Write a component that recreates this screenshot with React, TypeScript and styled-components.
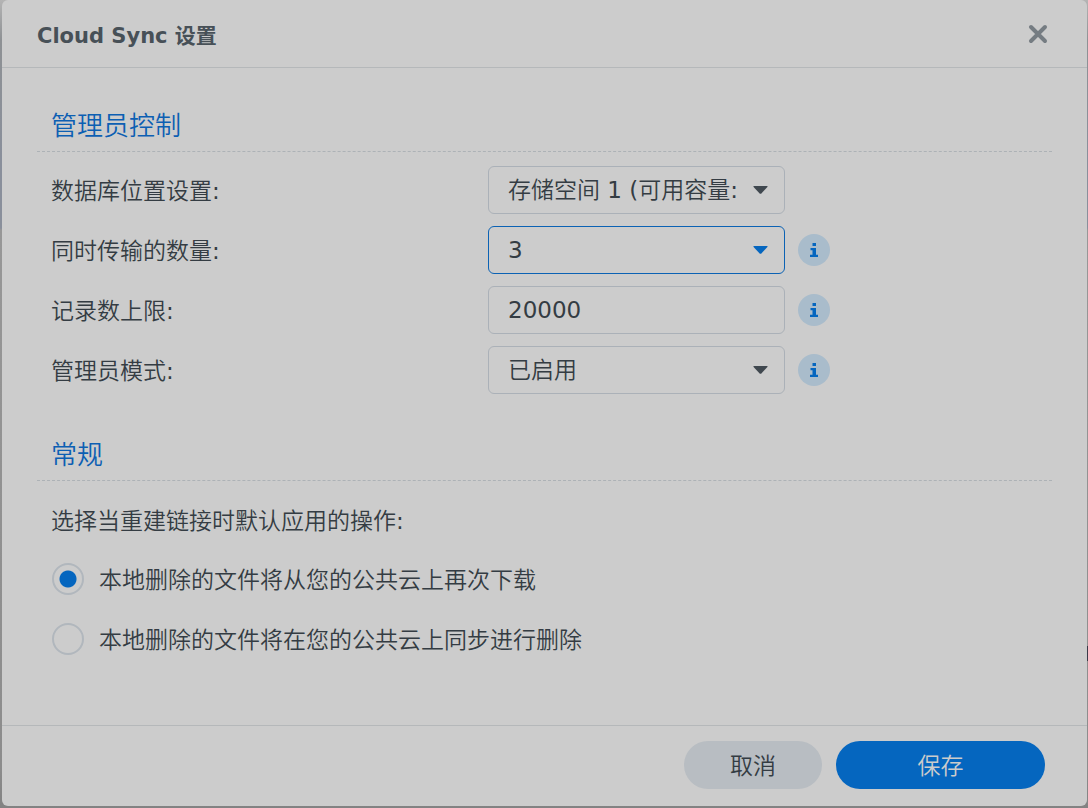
import React, { useState } from "react";
import styled, { createGlobalStyle } from "styled-components";

const GlobalStyle = createGlobalStyle`
  *, *::before, *::after { box-sizing: border-box; }
  body {
    margin: 0;
    font-family: "DejaVu Sans", "Noto Sans CJK SC DemiLight", "Noto Sans CJK SC", sans-serif;
    font-size: 23px;
    color: #343c43;
  }
  button, input, select { font: inherit; color: inherit; }
`;

const Backdrop = styled.div`
  display: flex;
  min-height: 100vh;
  padding: 0 1px 2px 2px;
  background:
    linear-gradient(#3a3a48, #3a3a48) right 80vh / 1px 15px no-repeat,
    linear-gradient(#b4b4b4 0, #8e9194 40px, #898f9b 160px, #898f9b 228px, #979797 230px, #8c8c8c 95%, #828282);
`;

const Dialog = styled.section`
  display: flex;
  flex: 1;
  flex-direction: column;
  min-width: 0;
  border-radius: 6px;
  background: #cccccc;
`;

const Header = styled.header`
  display: flex;
  align-items: center;
  justify-content: space-between;
  height: 68px;
  padding: 0 37px 0 35px;
  border-bottom: 1px solid #b5b8ba;
`;

const Title = styled.h1`
  margin: 0;
  padding-top: 4px;
  font-family: "DejaVu Sans", "Noto Sans CJK SC", sans-serif;
  font-size: 21px;
  line-height: 32px;
  font-weight: 700;
  color: #475057;
`;

const CloseButton = styled.button`
  display: flex;
  padding: 0;
  border: 0;
  background: none;
  color: #757c82;
  cursor: pointer;
`;

const Body = styled.form`
  display: flex;
  flex: 1;
  flex-direction: column;
  gap: 43px;
  padding: 40px 35px;
`;

const Group = styled.section`
  display: flex;
  flex-direction: column;
  gap: 14px;
`;

const GroupTitle = styled.h2`
  margin: 0;
  padding: 1px 14px 8px;
  border-bottom: 1px dashed #adb2b6;
  font-size: 26px;
  line-height: 34px;
  font-weight: 350;
  color: #0c5fb3;
`;

const Rows = styled.div`
  display: flex;
  flex-direction: column;
  gap: 12px;
  padding: 0 14px;
`;

const Row = styled.div`
  display: grid;
  grid-template-columns: 437px 297px auto;
  align-items: center;
  min-height: 48px;
`;

const RowLabel = styled.label`
  padding-top: 2px;
  line-height: 32px;
`;

const SelectWrap = styled.div<{ $active?: boolean }>`
  position: relative;
  color: ${(p) => (p.$active ? "#0566bf" : "#40484f")};
`;

const Select = styled.select<{ $active?: boolean }>`
  display: block;
  width: 100%;
  height: 48px;
  padding: 0 40px 0 19px;
  border: 1px solid ${(p) => (p.$active ? "#0b62b4" : "#abb1b8")};
  border-radius: 6px;
  outline: 0;
  appearance: none;
  background: transparent;
  color: #343c43;
`;

const Arrow = styled.svg`
  position: absolute;
  top: 20px;
  right: 17px;
  pointer-events: none;
`;

const TextInput = styled.input`
  width: 100%;
  height: 48px;
  padding: 0 19px;
  border: 1px solid #abb1b8;
  border-radius: 6px;
  outline: 0;
  background: transparent;
`;

const InfoButton = styled.button`
  display: flex;
  align-items: center;
  justify-content: center;
  width: 32px;
  height: 32px;
  margin-left: 13px;
  padding: 0;
  border: 0;
  border-radius: 50%;
  background: #a9bccb;
  color: #0566bf;
  cursor: pointer;
`;

const Fieldset = styled.fieldset`
  display: flex;
  flex-direction: column;
  gap: 12px;
  min-width: 0;
  margin: 0;
  padding: 0 14px;
  border: 0;
`;

const Legend = styled.legend`
  margin-bottom: 10px;
  padding: 2px 0 0;
  line-height: 48px;
`;

const Choice = styled.label`
  display: flex;
  align-items: center;
  gap: 15px;
  min-height: 48px;
  padding-left: 1px;
  line-height: 32px;
`;

const ChoiceText = styled.span`
  padding-top: 2px;
`;

const Radio = styled.input`
  flex: none;
  width: 32px;
  height: 32px;
  margin: 0;
  border: 2px solid #b1b7bd;
  border-radius: 50%;
  appearance: none;
  &:checked {
    background: radial-gradient(circle, #0566bf 8px, transparent 9px);
  }
`;

const Footer = styled.footer`
  display: flex;
  justify-content: flex-end;
  gap: 14px;
  padding: 15px 42px 17px;
  border-top: 1px solid #b5b8ba;
`;

const ActionButton = styled.button<{ $primary?: boolean }>`
  width: ${(p) => (p.$primary ? "209px" : "138px")};
  height: 48px;
  padding: 0 0 2px;
  border: 0;
  border-radius: 24px;
  background: ${(p) => (p.$primary ? "#0566bf" : "#b8bdc2")};
  color: ${(p) => (p.$primary ? "#cccccc" : "#343c43")};
  cursor: pointer;
`;

const Dropdown = ({ id, options, active }: { id: string; options: string[]; active?: boolean }) => (
  <SelectWrap $active={active}>
    <Select id={id} $active={active} defaultValue={options[0]}>
      {options.map((option) => (
        <option key={option}>{option}</option>
      ))}
    </Select>
    <Arrow width="15" height="8" viewBox="0 0 15 8" aria-hidden="true">
      <path d="M1 0h13q1 0 .4.9L8.6 7.2q-1.1 1-2.2 0L.6.9Q0 0 1 0z" fill="currentColor" />
    </Arrow>
  </SelectWrap>
);

const Info = ({ topic }: { topic: string }) => (
  <InfoButton type="button" aria-label={topic}>
    <svg width="8" height="14" viewBox="0 0 8 14" fill="currentColor" aria-hidden="true">
      <path d="M2.5 0h3.5v3h-3.5zM.5 5h5.5v6.8h2v2.2h-8v-2.2h2.5v-4.6h-2z" />
    </svg>
  </InfoButton>
);

export default function App() {
  const [action, setAction] = useState("download");
  return (
    <>
      <GlobalStyle />
      <Backdrop>
        <Dialog role="dialog" aria-labelledby="title">
          <Header>
            <Title id="title">Cloud Sync 设置</Title>
            <CloseButton type="button" aria-label="关闭">
              <svg width="24" height="22" viewBox="0 0 24 22" aria-hidden="true">
                <path d="M5 4l14 14M19 4L5 18" stroke="currentColor" strokeWidth="4" strokeLinecap="round" />
              </svg>
            </CloseButton>
          </Header>
          <Body id="settings">
            <Group>
              <GroupTitle>管理员控制</GroupTitle>
              <Rows>
                <Row>
                  <RowLabel htmlFor="volume">数据库位置设置:</RowLabel>
                  <Dropdown id="volume" options={["存储空间 1 (可用容量:"]} />
                </Row>
                <Row>
                  <RowLabel htmlFor="transfers">同时传输的数量:</RowLabel>
                  <Dropdown id="transfers" options={["3", "1", "2", "4", "5"]} active />
                  <Info topic="同时传输的数量" />
                </Row>
                <Row>
                  <RowLabel htmlFor="records">记录数上限:</RowLabel>
                  <TextInput id="records" defaultValue="20000" />
                  <Info topic="记录数上限" />
                </Row>
                <Row>
                  <RowLabel htmlFor="mode">管理员模式:</RowLabel>
                  <Dropdown id="mode" options={["已启用", "已禁用"]} />
                  <Info topic="管理员模式" />
                </Row>
              </Rows>
            </Group>
            <Group>
              <GroupTitle>常规</GroupTitle>
              <Fieldset>
                <Legend>选择当重建链接时默认应用的操作:</Legend>
                <Choice>
                  <Radio
                    type="radio"
                    name="action"
                    checked={action === "download"}
                    onChange={() => setAction("download")}
                  />
                  <ChoiceText>本地删除的文件将从您的公共云上再次下载</ChoiceText>
                </Choice>
                <Choice>
                  <Radio
                    type="radio"
                    name="action"
                    checked={action === "delete"}
                    onChange={() => setAction("delete")}
                  />
                  <ChoiceText>本地删除的文件将在您的公共云上同步进行删除</ChoiceText>
                </Choice>
              </Fieldset>
            </Group>
          </Body>
          <Footer>
            <ActionButton type="button">取消</ActionButton>
            <ActionButton type="submit" form="settings" $primary>
              保存
            </ActionButton>
          </Footer>
        </Dialog>
      </Backdrop>
    </>
  );
}
